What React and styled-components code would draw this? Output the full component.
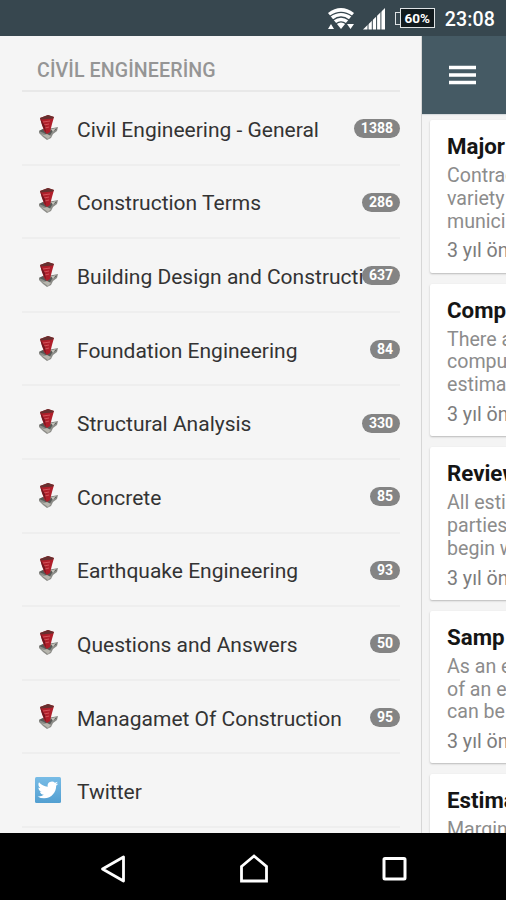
import styled, { createGlobalStyle } from 'styled-components';

const GlobalStyle = createGlobalStyle`
  * {
    box-sizing: border-box;
  }

  body {
    margin: 0;
    font-family: Roboto, 'Noto Sans', sans-serif;
    background: #000;
  }
`;

const Screen = styled.div`
  display: flex;
  flex-direction: column;
  width: 506px;
  height: 900px;
  overflow: hidden;
`;

const StatusBar = styled.header`
  display: flex;
  flex: none;
  align-items: center;
  justify-content: flex-end;
  height: 36px;
  padding: 2px 11px 0 0;
  background: #37474f;
  color: #fff;

  > svg {
    flex: none;
  }
`;

const Battery = styled.div`
  display: flex;
  align-items: center;
  margin: -2px 10px 0 10px;

  &::before {
    content: '';
    width: 4px;
    height: 11px;
    border: 1.5px solid #dfe3e5;
    border-right: 0;
  }

  > span {
    width: 35px;
    height: 20px;
    border: 1.5px solid #dfe3e5;
    background: #111a1e;
    font-size: 13.5px;
    font-weight: 700;
    line-height: 18px;
    text-align: center;
  }
`;

const Clock = styled.div`
  padding-top: 2px;
  font-size: 19.6px;
  font-weight: 500;
  line-height: 34px;
  letter-spacing: 0.1px;
`;

const Main = styled.main`
  display: flex;
  flex: none;
  height: 797px;
  overflow: hidden;
  background: #f4f4f4;
`;

const Drawer = styled.nav`
  flex: none;
  width: 422px;
  padding: 0 21px 0 22px;
  background: #f5f5f5;
  border-right: 1px solid #d6d6d6;
`;

const DrawerTitle = styled.h1`
  height: 56px;
  margin: 0;
  padding-left: 15px;
  border-bottom: 2px solid #e8e8e8;
  color: #959595;
  font-size: 19.6px;
  font-weight: 500;
  line-height: 69px;
  letter-spacing: 0.1px;
  white-space: nowrap;
`;

const MenuItem = styled.div`
  display: flex;
  align-items: center;
  height: 73.6px;
  padding: 4px 0 0 13px;
  border-bottom: 2px solid #eee;

  > svg {
    flex: none;
    margin-top: -4px;
  }
`;

const MenuLabel = styled.div`
  flex: 1;
  min-width: 0;
  margin-left: 16px;
  color: #333;
  font-size: 21px;
  line-height: 28px;
  white-space: nowrap;
`;

const Count = styled.span`
  z-index: 1;
  flex: none;
  height: 19px;
  margin-top: -2px;
  padding: 0 7px;
  border-radius: 10px;
  background: #848484;
  color: #fff;
  font-size: 14px;
  font-weight: 700;
  line-height: 19px;
`;

const Content = styled.section`
  flex: 1;
  min-width: 0;
  overflow: hidden;
`;

const Toolbar = styled.div`
  display: flex;
  align-items: center;
  height: 78px;
  margin-bottom: 6px;
  padding-left: 27px;
  background: #455a64;
  box-shadow: 0 1px 1px #d8dcde;
`;

const Feed = styled.div`
  display: flex;
  flex-direction: column;
  gap: 11px;
  padding-left: 8px;
`;

const Card = styled.article`
  width: 480px;
  height: 152.6px;
  padding: 12px 17px 0;
  border-radius: 2px;
  background: #fff;
  box-shadow: 0 1px 2px #b9b9b9;
  white-space: nowrap;
`;

const CardTitle = styled.h2`
  margin: 0 0 5px;
  color: #151515;
  font-size: 22.3px;
  font-weight: 700;
  line-height: 28px;
`;

const CardText = styled.p`
  margin: 0;
  color: #8c8c8c;
  font-size: 19.6px;
  line-height: 22.8px;
  white-space: pre;
`;

const CardDate = styled.time`
  display: block;
  margin-top: 6px;
  color: #7c7c7c;
  font-size: 19.6px;
  line-height: 23px;
`;

const NavBar = styled.footer`
  display: flex;
  flex: none;
  align-items: center;
  justify-content: space-between;
  height: 67px;
  padding: 4px 97px 0 98px;
  background: #000;
`;

const categories = [
  { name: 'Civil Engineering - General', count: 1388 },
  { name: 'Construction Terms', count: 286 },
  { name: 'Building Design and Constructi', count: 637 },
  { name: 'Foundation Engineering', count: 84 },
  { name: 'Structural Analysis', count: 330 },
  { name: 'Concrete', count: 85 },
  { name: 'Earthquake Engineering', count: 93 },
  { name: 'Questions and Answers', count: 50 },
  { name: 'Managamet Of Construction', count: 95 },
];

const posts = [
  { title: 'Major', text: 'Contrac\nvariety\nmunici' },
  { title: 'Comp', text: 'There a\ncompu\nestima' },
  { title: 'Review', text: 'All esti\nparties\nbegin w' },
  { title: 'Samp', text: 'As an e\nof an e\ncan be' },
  { title: 'Estima', text: 'Margin' },
];

const WifiIcon = () => (
  <svg width="28" height="24" viewBox="0 0 28 24">
    <path d="M1 6Q14-4 27 6L14 22Z" fill="#fff" />
    <path
      d="M3 9.3Q14 1.5 25 9.3M6 13Q14 7 22 13M9 16.8Q14 13 19 16.8"
      fill="none"
      stroke="#37474f"
      strokeWidth="1.3"
    />
    <path d="M1 22l3-5 3 5ZM20 17h7l-3.5 5Z" fill="#fff" />
  </svg>
);

const SignalIcon = () => (
  <svg width="22" height="22" viewBox="0 0 22 22" style={{ marginLeft: 8 }}>
    <path d="M0 21.5L22 0V21.5Z" fill="#fff" />
    <path d="M5 15v7M9.3 10v12M13.6 6v16M17.9 2v20" stroke="#37474f" strokeWidth="1" />
  </svg>
);

const BookIcon = () => (
  <svg width="26" height="28" viewBox="0 0 26 28">
    <path d="M4 17l4-2 10-1 5-1-1 4-4 3-2 4-4 2-4-3-4-4Z" fill="#8b8b87" />
    <path d="M4 17l5 2 5 4 3-5 5-3-4-1-4 4-6-3Z" fill="#565956" />
    <path d="M6 20l7 5 3-3-4-2-3 1Z" fill="#b7b6ae" />
    <path d="M16 15l5-1-3 4Z" fill="#c2c1b9" />
    <path d="M5 4l8-3 6 2-2 7-2 8-3 2-3-3Z" fill="#b01e2a" />
    <path d="M5 4l8-3 6 2-1 1.5L6 5.5Z" fill="#66302f" />
    <path d="M8 8l7-1M9 11l5-1M10 14l4-1" stroke="#d2535a" strokeWidth="1" />
    <path d="M5 4l2 7 4 8-1-7Z" fill="#731820" />
  </svg>
);

const TwitterIcon = () => (
  <svg width="26" height="26" viewBox="0 0 26 26">
    <defs>
      <linearGradient id="sky" x1="0" y1="0" x2="0" y2="1">
        <stop offset="0" stopColor="#78bce6" />
        <stop offset="1" stopColor="#529fd1" />
      </linearGradient>
    </defs>
    <rect width="26" height="26" rx="1.5" fill="url(#sky)" />
    <path
      transform="translate(2.6 2.6) scale(.86)"
      d="M23.953 4.57a10 10 0 01-2.825.775 4.958 4.958 0 002.163-2.723c-.951.555-2.005.959-3.127 1.184a4.92 4.92 0 00-8.384 4.482C7.69 8.095 4.067 6.13 1.64 3.162a4.822 4.822 0 00-.666 2.475c0 1.71.87 3.213 2.188 4.096a4.904 4.904 0 01-2.228-.616v.06a4.923 4.923 0 003.946 4.827 4.996 4.996 0 01-2.212.085 4.936 4.936 0 004.604 3.417 9.867 9.867 0 01-6.102 2.105c-.39 0-.779-.023-1.17-.067a13.995 13.995 0 007.557 2.209c9.053 0 13.998-7.496 13.998-13.985 0-.21 0-.42-.015-.63A9.935 9.935 0 0024 4.59z"
      fill="#fff"
    />
  </svg>
);

const MenuIcon = () => (
  <svg width="27" height="20" viewBox="0 0 27 20">
    <path d="M0 2.5h27M0 10h27M0 17.5h27" stroke="#fff" strokeWidth="3.6" />
  </svg>
);

export default function App() {
  return (
    <>
      <GlobalStyle />
      <Screen>
        <StatusBar>
          <WifiIcon />
          <SignalIcon />
          <Battery>
            <span>60%</span>
          </Battery>
          <Clock>23:08</Clock>
        </StatusBar>
        <Main>
          <Drawer>
            <DrawerTitle>CİVİL ENGİNEERİNG</DrawerTitle>
            {categories.map((category) => (
              <MenuItem key={category.name}>
                <BookIcon />
                <MenuLabel>{category.name}</MenuLabel>
                <Count>{category.count}</Count>
              </MenuItem>
            ))}
            <MenuItem>
              <TwitterIcon />
              <MenuLabel>Twitter</MenuLabel>
            </MenuItem>
          </Drawer>
          <Content>
            <Toolbar>
              <MenuIcon />
            </Toolbar>
            <Feed>
              {posts.map((post) => (
                <Card key={post.title}>
                  <CardTitle>{post.title}</CardTitle>
                  <CardText>{post.text}</CardText>
                  <CardDate>3 yıl ön</CardDate>
                </Card>
              ))}
            </Feed>
          </Content>
        </Main>
        <NavBar>
          <svg width="30" height="30" viewBox="0 0 30 30">
            <path d="M4.5 15L25.5 3V27Z" fill="none" stroke="#fff" strokeWidth="2.8" strokeLinejoin="round" />
          </svg>
          <svg width="30" height="30" viewBox="0 0 30 30">
            <path d="M2.5 12.5L15 2L27.5 12.5V27H2.5Z" fill="none" stroke="#fff" strokeWidth="2.8" />
          </svg>
          <svg width="30" height="30" viewBox="0 0 30 30">
            <rect x="5" y="4.5" width="21" height="20.5" rx="1" fill="none" stroke="#fff" strokeWidth="3" />
          </svg>
        </NavBar>
      </Screen>
    </>
  );
}
